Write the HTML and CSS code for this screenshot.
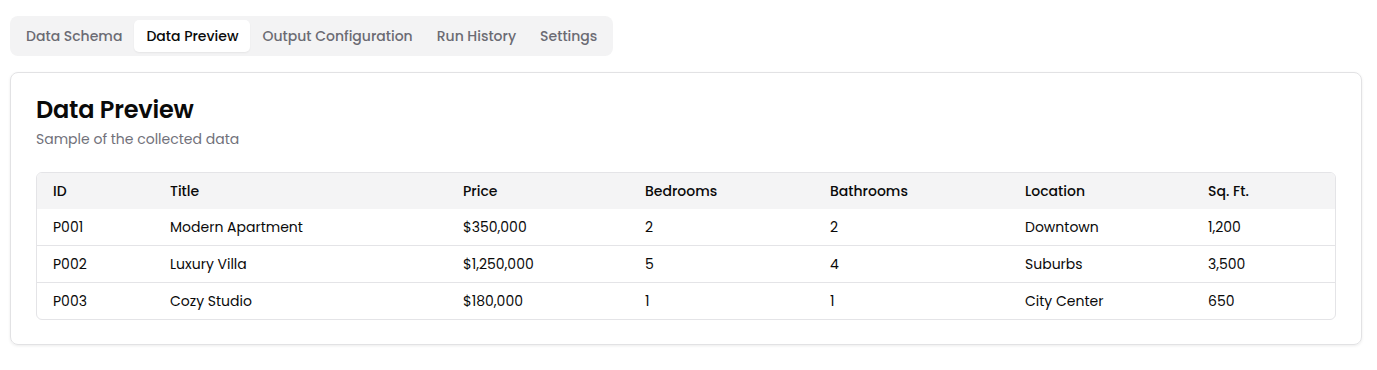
FILE: index.html
```html
<!DOCTYPE html>
<html lang="en">
<head>
    <meta charset="UTF-8">
    <meta name="viewport" content="width=device-width, initial-scale=1.0">
    <title>Data Preview</title>
    <link rel="stylesheet" href="styles.css">
</head>
<body>
    <div class="page">
        <div class="tabs">
            <button class="tab">Data Schema</button>
            <button class="tab active">Data Preview</button>
            <button class="tab">Output Configuration</button>
            <button class="tab">Run History</button>
            <button class="tab">Settings</button>
        </div>

        <div class="card">
            <h2 class="card-title">Data Preview</h2>
            <p class="card-subtitle">Sample of the collected data</p>

            <div class="table-wrap">
                <table class="preview-table">
                    <thead>
                        <tr>
                            <th class="col-id">ID</th>
                            <th class="col-title">Title</th>
                            <th class="col-price">Price</th>
                            <th class="col-bed">Bedrooms</th>
                            <th class="col-bath">Bathrooms</th>
                            <th class="col-loc">Location</th>
                            <th>Sq. Ft.</th>
                        </tr>
                    </thead>
                    <tbody>
                        <tr>
                            <td>P001</td>
                            <td>Modern Apartment</td>
                            <td>$350,000</td>
                            <td>2</td>
                            <td>2</td>
                            <td>Downtown</td>
                            <td>1,200</td>
                        </tr>
                        <tr>
                            <td>P002</td>
                            <td>Luxury Villa</td>
                            <td>$1,250,000</td>
                            <td>5</td>
                            <td>4</td>
                            <td>Suburbs</td>
                            <td>3,500</td>
                        </tr>
                        <tr>
                            <td>P003</td>
                            <td>Cozy Studio</td>
                            <td>$180,000</td>
                            <td>1</td>
                            <td>1</td>
                            <td>City Center</td>
                            <td>650</td>
                        </tr>
                    </tbody>
                </table>
            </div>
        </div>
    </div>
</body>
</html>
```

FILE: styles.css
```css
* {
    margin: 0;
    padding: 0;
    box-sizing: border-box;
}

body {
    font-family: 'Poppins', 'Inter', sans-serif;
    background: #ffffff;
    color: #111111;
}

.page {
    padding: 16px 15px 20px 10px;
}

/* Tab bar */
.tabs {
    display: inline-flex;
    align-items: center;
    background: #f3f3f4;
    padding: 4px;
    border-radius: 8px;
    margin-bottom: 16px;
}

.tab {
    font-family: inherit;
    font-size: 14px;
    font-weight: 500;
    color: #6b6b73;
    background: none;
    border: none;
    height: 32px;
    padding: 0 12px;
    border-radius: 5px;
    cursor: pointer;
}

.tab.active {
    background: #ffffff;
    color: #0a0a0a;
    box-shadow: 0 1px 2px rgba(0, 0, 0, 0.06);
}

/* Card */
.card {
    border: 1px solid #e2e2e4;
    border-radius: 8px;
    box-shadow: 0 1px 3px rgba(0, 0, 0, 0.08);
    padding: 25px 25px 24px;
}

.card-title {
    font-size: 24px;
    font-weight: 600;
    color: #0a0a0a;
    line-height: 24px;
    letter-spacing: -0.2px;
}

.card-subtitle {
    font-size: 14px;
    color: #71717a;
    margin-top: 7px;
    line-height: 20px;
}

/* Table */
.table-wrap {
    margin-top: 23px;
    border: 1px solid #e4e4e7;
    border-radius: 6px;
    overflow: hidden;
}

.preview-table {
    width: 100%;
    border-collapse: collapse;
    font-size: 14px;
}

.preview-table th {
    background: #f4f4f5;
    font-weight: 500;
    text-align: left;
    color: #0a0a0a;
    height: 36px;
    padding: 0 16px;
}

.preview-table td {
    height: 37px;
    padding: 2px 16px 0;
    border-top: 1px solid #e4e4e7;
    color: #0a0a0a;
}

.preview-table tbody tr:first-child td {
    height: 36px;
    border-top: none;
}

.col-id { width: 117px; }
.col-title { width: 293px; }
.col-price { width: 182px; }
.col-bed { width: 185px; }
.col-bath { width: 195px; }
.col-loc { width: 183px; }
```
